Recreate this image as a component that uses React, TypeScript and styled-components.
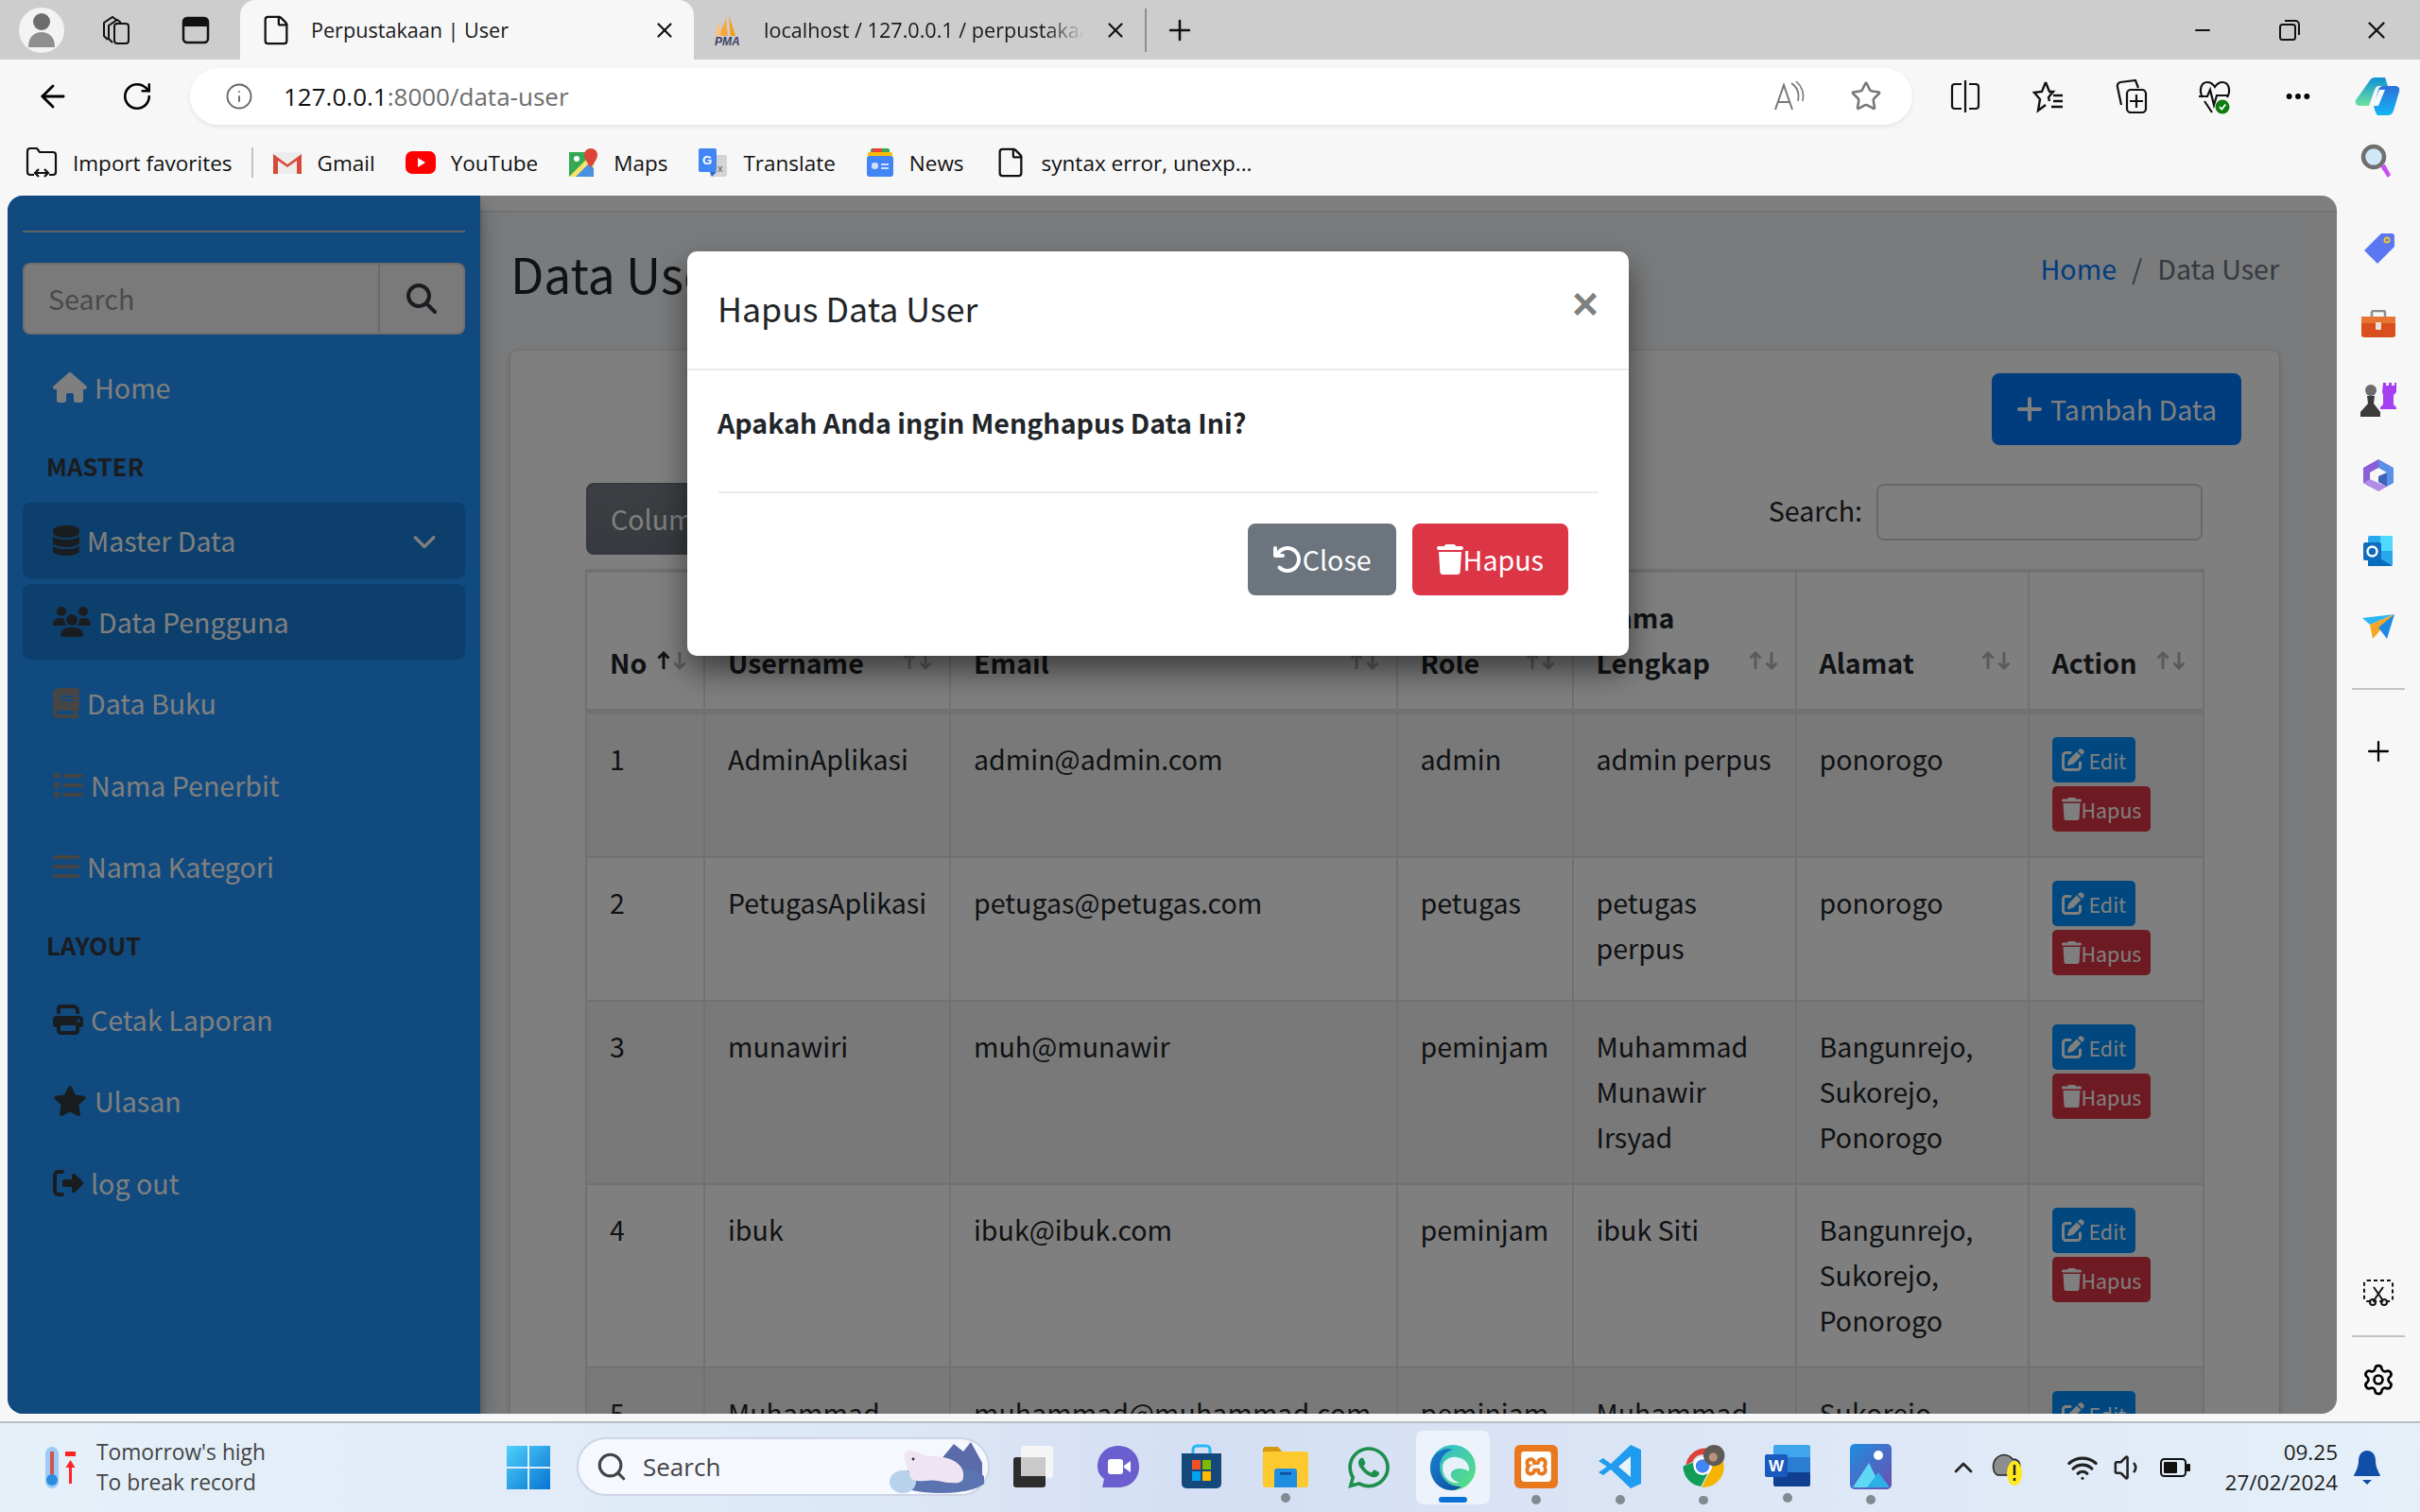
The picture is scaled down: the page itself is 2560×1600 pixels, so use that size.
import styled, { createGlobalStyle } from "styled-components";
import {
  FaHouse, FaDatabase, FaUsers, FaBook, FaList, FaBars, FaPrint, FaStar, FaRightFromBracket,
  FaMagnifyingGlass, FaChevronDown, FaPlus, FaPenToSquare, FaTrash, FaArrowRotateLeft, FaWhatsapp,
} from "react-icons/fa6";
import { SiXampp } from "react-icons/si";
import {
  ArrowLeft, RotateCw, Info, Star, Plus, X, Minus, Ellipsis, Settings, Search, ChevronUp, Wifi, Volume1, File,
} from "lucide-react";

const GlobalStyle = createGlobalStyle`
  html, body { margin: 0; padding: 0; background: #f7f7f7; }
  * { box-sizing: border-box; }
`;

// latin glyphs of Noto Sans CJK run about 12% larger than the page's font, so sizes are scaled down
const pageFont = `"Noto Sans CJK SC", "Noto Sans", sans-serif`;
const chromeFont = `"Open Sans", "Noto Sans", sans-serif`;

const Screen = styled.div`
  width: 2560px;
  height: 1600px;
  display: flex;
  flex-direction: column;
  overflow: hidden;
  background: #f7f7f7;
  font-family: ${chromeFont};
`;

/* browser chrome */
const TabStrip = styled.div`
  height: 63px;
  flex: none;
  display: flex;
  align-items: center;
  padding-left: 20px;
  background: #cdcdcd;
  color: #111;
`;
const Avatar = styled.div`
  width: 48px;
  height: 48px;
  border-radius: 50%;
  background: #f3f3f3;
  display: flex;
  align-items: center;
  justify-content: center;
  margin-right: 13px;
`;
const StripSlot = styled.div<{ $w?: number }>`
  width: ${(p) => p.$w ?? 84}px;
  height: 63px;
  flex: none;
  display: flex;
  align-items: center;
  justify-content: center;
`;
const ActiveTab = styled.div`
  width: 480px;
  height: 63px;
  margin-left: 5px;
  flex: none;
  display: flex;
  align-items: center;
  gap: 20px;
  padding: 0 18px 0 21px;
  background: #f7f7f7;
  border-radius: 16px 16px 0 0;
`;
const IdleTab = styled.div`
  width: 477px;
  height: 63px;
  flex: none;
  display: flex;
  align-items: center;
  gap: 20px;
  padding: 0 18px 0 20px;
`;
const TabTitle = styled.span<{ $fade?: boolean }>`
  flex: 1;
  font-size: 21.6px;
  white-space: nowrap;
  overflow: hidden;
  color: #1a1a1a;
  mask-image: ${(p) => (p.$fade ? "linear-gradient(90deg, #000 88%, transparent)" : "none")};
`;
const StripDivider = styled.div`
  width: 2px;
  height: 46px;
  background: #8e8e8e;
  flex: none;
`;
const WindowControls = styled.div`
  margin-left: auto;
  display: flex;
`;

const Toolbar = styled.div`
  height: 82px;
  flex: none;
  display: flex;
  align-items: center;
  padding: 0 0 4px 12px;
`;
const ToolSlot = styled.div<{ $w?: number }>`
  width: ${(p) => p.$w ?? 88}px;
  flex: none;
  display: flex;
  align-items: center;
  justify-content: center;
`;
const AddressBar = styled.div`
  width: 1822px;
  height: 60px;
  margin: 0 12px 0 11px;
  flex: none;
  display: flex;
  align-items: center;
  padding: 0 32px 0 37px;
  background: #fff;
  border-radius: 30px;
  box-shadow: 0 2px 5px rgba(0, 0, 0, 0.08);
`;
const Url = styled.span`
  margin-left: 32px;
  font-size: 26px;
  color: #111;
`;
const UrlMuted = styled.span`
  color: #6d6d6d;
`;
const AddressEnd = styled.div`
  margin-left: auto;
  display: flex;
  align-items: center;
  gap: 46px;
  color: #777;
`;

const FavoritesBar = styled.div`
  height: 62px;
  flex: none;
  display: flex;
  align-items: center;
  gap: 32px;
  padding: 0 0 8px 27px;
  color: #111;
  font-size: 22.5px;
`;
const Favorite = styled.div`
  display: flex;
  align-items: center;
  gap: 16px;
  white-space: nowrap;
`;
const FavDivider = styled.div`
  width: 2px;
  height: 32px;
  margin: 0 -12px;
  background: #c4c4c4;
`;
const FavSearch = styled.div`
  margin-left: auto;
  width: 92px;
  display: flex;
  justify-content: center;
`;

const Body = styled.div`
  flex: 1;
  min-height: 0;
  display: flex;
`;

/* the admin page */
const Page = styled.div`
  position: relative;
  flex: 1;
  min-width: 0;
  margin: 0 0 8px 8px;
  display: flex;
  overflow: hidden;
  border-radius: 16px;
  background: #f4f6f9;
  font-family: ${pageFont};
  font-size: 28.6px;
  line-height: 48px;
  color: #212529;
`;
const Sidebar = styled.aside`
  position: relative;
  z-index: 1;
  width: 500px;
  flex: none;
  padding: 37px 16px 0;
  background: #2094ff;
  box-shadow: 0 14px 28px rgba(0, 0, 0, 0.25), 0 10px 10px rgba(0, 0, 0, 0.22);
`;
const SideRule = styled.div`
  height: 2px;
  background: #c6c6c6;
`;
const SideSearch = styled.div`
  height: 76px;
  margin: 32px 0 16px;
  display: flex;
  background: #f4f4f4;
  border: 2px solid #dcdcdc;
  border-radius: 8px;
`;
const SideSearchField = styled.div`
  flex: 1;
  padding: 0 25px;
  display: flex;
  align-items: center;
  color: #959595;
  border-right: 2px solid #d4d4d4;
`;
const SideSearchButton = styled.div`
  width: 88px;
  display: flex;
  align-items: center;
  justify-content: center;
  color: #343a40;
`;
const NavItem = styled.div<{ $active?: boolean; $icon?: string; $iconW: number }>`
  height: 80px;
  margin-bottom: 6.4px;
  padding: 0 32px;
  display: flex;
  align-items: center;
  gap: 8px;
  color: #fff;
  border-radius: 8px;
  background: ${(p) => (p.$active ? "rgba(0, 0, 0, 0.15)" : "transparent")};
  & > svg {
    color: ${(p) => p.$icon ?? "#fff"};
    flex: none;
    height: 32px;
    width: ${(p) => p.$iconW}px;
  }
`;
const NavChevron = styled.span`
  margin-left: auto;
  margin-right: -2px;
  display: flex;
`;
const NavHeader = styled.div`
  height: 75.2px;
  padding: 0 0 2px 25px;
  display: flex;
  align-items: center;
  font-size: 25.7px;
  font-weight: 700;
  color: #343a40;
`;

const Main = styled.main`
  flex: 1;
  min-width: 0;
  display: flex;
  flex-direction: column;
`;
const TopBar = styled.div`
  height: 18px;
  flex: none;
  background: #fff;
  border-bottom: 2px solid #dee2e6;
`;
const MainRow = styled.div`
  flex: 1;
  min-height: 0;
  display: flex;
`;
const Content = styled.div`
  flex: 1;
  min-width: 0;
  padding: 32px 31px 0 32px;
`;
const ScrollTrack = styled.div`
  width: 30px;
  flex: none;
  background: #f6f6f7;
`;
const ContentHeader = styled.div`
  display: flex;
  justify-content: space-between;
  align-items: flex-start;
  height: 114px;
`;
const PageTitle = styled.h1`
  margin: -3px 0 0;
  font-size: 51.4px;
  font-weight: 400;
  line-height: 69px;
`;
const Breadcrumb = styled.div`
  display: flex;
  gap: 16px;
  padding-top: 3px;
  color: #6c757d;
`;
const CrumbLink = styled.span`
  color: #007bff;
`;
const Card = styled.section`
  background: #fff;
  border-radius: 8px;
  padding: 24px 40px 0;
  box-shadow: 0 0 2px rgba(0, 0, 0, 0.125), 0 2px 6px rgba(0, 0, 0, 0.2);
`;
const CardTop = styled.div`
  display: flex;
  justify-content: flex-end;
`;
const Button = styled.button<{ $tone: string; $iconW?: number }>`
  height: 76px;
  padding: 0 24px 1px;
  display: inline-flex;
  align-items: center;
  border: 2px solid ${(p) => p.$tone};
  border-radius: 8px;
  background: ${(p) => p.$tone};
  color: #fff;
  font-family: ${pageFont};
  font-size: 28.6px;
  line-height: 48px;
  white-space: nowrap;
  svg {
    height: 32px;
    width: ${(p) => p.$iconW ?? 32}px;
    flex: none;
  }
`;
const AddButton = styled(Button)`
  gap: 8px;
`;
const TableArea = styled.div`
  padding: 40px 41px 0 39px;
`;
const TableControls = styled.div`
  display: flex;
  justify-content: space-between;
  align-items: flex-start;
  height: 91px;
`;
const ColumnButton = styled(Button)`
  margin-left: 1px;
  background: linear-gradient(#787f86, #6c757d);
`;
const TableSearch = styled.label`
  display: flex;
  align-items: center;
  gap: 15px;
  margin-top: 1px;
`;
const SearchLabel = styled.span`
  margin-top: -5px;
`;
const SearchBox = styled.div`
  width: 345px;
  height: 60px;
  border: 2px solid #ced4da;
  border-radius: 8px;
  background: #fff;
`;
const DataTable = styled.table`
  width: 1710px;
  table-layout: fixed;
  border-collapse: collapse;
  border-top: 4px solid #dee2e6;
  border-left: 2px solid #dee2e6;
  border-right: 2px solid #dee2e6;
`;
const HeadCell = styled.th`
  position: relative;
  padding: 23px 60px 25px 24px;
  text-align: left;
  vertical-align: bottom;
  font-weight: 700;
  border-left: 2px solid #dee2e6;
  border-bottom: 6px solid #dee2e6;
`;
const SortArrows = styled.span`
  position: absolute;
  right: 18px;
  bottom: 41px;
  display: flex;
  gap: 3px;
`;
const Row = styled.tr<{ $striped: boolean }>`
  background: ${(p) => (p.$striped ? "rgba(0, 0, 0, 0.05)" : "transparent")};
`;
const Cell = styled.td`
  padding: 23px 24px 25px;
  vertical-align: top;
  border: 2px solid #dee2e6;
`;
const RowActions = styled.div`
  display: flex;
  flex-direction: column;
  align-items: flex-start;
  gap: 4px;
  padding: 1px 0;
`;
const SmallButton = styled.button<{ $tone: string; $gap?: number; $iconW: number }>`
  height: 48px;
  padding: 0 10px;
  display: inline-flex;
  align-items: center;
  gap: ${(p) => p.$gap ?? 0}px;
  border: 0;
  border-radius: 5px;
  background: ${(p) => p.$tone};
  color: #fff;
  font-family: ${pageFont};
  font-size: 21.4px;
  svg {
    height: 24px;
    width: ${(p) => p.$iconW}px;
    flex: none;
  }
`;

/* modal */
const Backdrop = styled.div`
  position: absolute;
  inset: 0;
  z-index: 5;
  background: rgba(0, 0, 0, 0.5);
`;
const Modal = styled.div`
  position: absolute;
  top: 59px;
  left: 719px;
  width: 996px;
  height: 428px;
  background: #fff;
  border-radius: 10px;
  color: #212529;
  box-shadow: 0 16px 32px rgba(0, 0, 0, 0.5);
`;
const ModalHeader = styled.div`
  height: 126px;
  padding: 32px;
  display: flex;
  justify-content: space-between;
  border-bottom: 2px solid #e9ecef;
`;
const ModalTitle = styled.h5`
  margin: -2px 0 0;
  font-size: 35.7px;
  font-weight: 400;
  line-height: 60px;
`;
const ModalClose = styled.span`
  font-family: "Liberation Sans", sans-serif;
  font-size: 48px;
  font-weight: 700;
  line-height: 48px;
  color: #808080;
`;
const ModalBody = styled.div`
  padding: 31px 32px 0;
`;
const Question = styled.p`
  margin: 0;
  font-weight: 700;
`;
const ModalRule = styled.div`
  height: 2px;
  margin-top: 49px;
  background: #e9ecef;
`;
const ModalActions = styled.div`
  display: flex;
  justify-content: flex-end;
  gap: 17px;
  padding: 32px 64px 0 32px;
`;

/* edge rail */
const Rail = styled.div`
  width: 88px;
  flex: none;
  padding: 16px 0 4px;
  display: flex;
  flex-direction: column;
  align-items: center;
`;
const RailSlot = styled.div`
  width: 88px;
  height: 80px;
  flex: none;
  display: flex;
  align-items: center;
  justify-content: center;
`;
const RailRule = styled.div<{ $gap: number }>`
  width: 56px;
  height: 2px;
  margin: ${(p) => p.$gap}px 0;
  background: #c4c4c4;
  flex: none;
`;
const RailSpring = styled.div`
  flex: 1;
`;

/* windows taskbar */
const Taskbar = styled.footer`
  height: 96px;
  flex: none;
  display: flex;
  border-top: 2px solid #b9bec6;
  background: linear-gradient(90deg, #e5f0f9 0%, #e0ebf8 28%, #d5dff3 50%, #dce6f6 72%, #e5f0f9 100%);
  color: #222;
`;
const Weather = styled.div`
  width: 508px;
  padding-left: 45px;
  display: flex;
  align-items: center;
  gap: 21px;
`;
const WeatherText = styled.div`
  font-size: 22.8px;
  line-height: 32px;
  color: #444;
  white-space: nowrap;
`;
const StartSlot = styled.div`
  width: 102px;
  display: flex;
  align-items: center;
  justify-content: center;
`;
const SearchPill = styled.div`
  width: 437px;
  height: 62px;
  margin: 15px 3px 0 0;
  padding: 0 4px 0 18px;
  display: flex;
  align-items: center;
  gap: 16px;
  background: #f5f8fe;
  border: 2px solid #cdd5e6;
  border-radius: 31px;
  font-size: 26px;
  color: #444;
`;
const PillArt = styled.div`
  margin-left: auto;
  display: flex;
`;
const TaskSlot = styled.div`
  width: 88.5px;
  flex: none;
  display: flex;
  justify-content: center;
`;
const TaskTile = styled.div<{ $active?: boolean }>`
  width: 78px;
  height: 78px;
  margin-top: 8px;
  padding-top: 14px;
  display: flex;
  flex-direction: column;
  align-items: center;
  gap: 6px;
  border-radius: 8px;
  background: ${(p) => (p.$active ? "rgba(255, 255, 255, 0.55)" : "transparent")};
`;
const TaskMark = styled.div<{ $active?: boolean }>`
  width: ${(p) => (p.$active ? 30 : 10)}px;
  height: ${(p) => (p.$active ? 6 : 10)}px;
  border-radius: 5px;
  background: ${(p) => (p.$active ? "#0a74d6" : "#838a93")};
`;
const Tray = styled.div`
  margin-left: auto;
  display: flex;
  align-items: center;
  padding-right: 25px;
`;
const TraySlot = styled.div<{ $gap?: number }>`
  width: 49px;
  margin-left: ${(p) => p.$gap ?? 0}px;
  display: flex;
  justify-content: center;
`;
const Clock = styled.div`
  width: 148px;
  text-align: right;
  font-size: 22.5px;
  line-height: 32px;
  color: #222;
`;
const BellSlot = styled.div`
  width: 62px;
  display: flex;
  justify-content: center;
`;

/* drawn icons */
const PersonIcon = () => (
  <svg width="30" height="38" viewBox="0 0 30 38">
    <circle cx="15" cy="10" r="9" fill="#6d6d6d" />
    <path d="M1 37c0-11 6-16 14-16s14 5 14 16z" fill="#8f8f8f" />
  </svg>
);
const WorkspacesIcon = () => (
  <svg width="34" height="34" viewBox="0 0 34 34" fill="none" stroke="#111" strokeWidth="2">
    <path d="M8 27 4 23V9l9-6 4 3" />
    <path d="M13 30 9 26V12l9-6 4 3" />
    <rect x="15" y="10" width="15" height="21" rx="3" />
  </svg>
);
const VerticalTabsIcon = () => (
  <svg width="32" height="32" viewBox="0 0 32 32">
    <rect x="3" y="3" width="26" height="26" rx="4" fill="none" stroke="#111" strokeWidth="2.5" />
    <path d="M3 7a4 4 0 0 1 4-4h18a4 4 0 0 1 4 4v5H3z" fill="#111" />
  </svg>
);
const RestoreIcon = () => (
  <svg width="24" height="24" viewBox="0 0 24 24" fill="none" stroke="#111" strokeWidth="2">
    <rect x="2" y="6" width="16" height="16" rx="2.5" />
    <path d="M7 2h11a4 4 0 0 1 4 4v11" />
  </svg>
);
const PmaIcon = () => (
  <svg width="34" height="34" viewBox="0 0 34 34">
    <path d="M17 1 24 23H19z" fill="#f89c0e" />
    <path d="M14 5 16 23H6z" fill="#f6a93b" />
    <path d="M6 7 9 23H3z" fill="#f9c27b" />
    <text x="2" y="33" fontFamily="Liberation Sans, sans-serif" fontSize="12" fontWeight="700" fontStyle="italic" fill="#3b4266">PMA</text>
  </svg>
);
const ReadAloudIcon = () => (
  <svg width="36" height="36" viewBox="0 0 36 36" fill="none" stroke="#777" strokeWidth="2">
    <path d="M3 32 12 6l9 26M6 24h12" />
    <path d="M20 4c6 4 9 10 7 19M25 2c6 5 9 13 7 21" strokeWidth="1.6" />
  </svg>
);
const SplitIcon = () => (
  <svg width="32" height="34" viewBox="0 0 32 34" fill="none" stroke="#111" strokeWidth="2.2">
    <path d="M12 4H5a3 3 0 0 0-3 3v20a3 3 0 0 0 3 3h7M20 4h7a3 3 0 0 1 3 3v20a3 3 0 0 1-3 3h-7" />
    <path d="M16 0v34" />
  </svg>
);
const FavListIcon = () => (
  <svg width="36" height="36" viewBox="0 0 36 36" fill="none" stroke="#111" strokeWidth="2.4">
    <path d="M15 3l4 10h4l-5 6 1 4M15 3l-4 10-8 1 6 7-2 12 8-6" />
    <path d="M23 17h10M23 23h10M21 29h12" />
  </svg>
);
const CollectionsIcon = () => (
  <svg width="34" height="36" viewBox="0 0 34 36" fill="none" stroke="#111" strokeWidth="2.2">
    <path d="M6 27 2 8a4 4 0 0 1 3-5l16-2 3 8" />
    <rect x="12" y="11" width="20" height="24" rx="4" />
    <path d="M22 16v14M15 23h14" />
  </svg>
);
const HeartCheckIcon = () => (
  <svg width="38" height="38" viewBox="0 0 38 38">
    <path d="M6 20C2 13 4 4 11 4c4 0 6 2 8 5 2-3 4-5 8-5 7 0 9 9 5 16M2 19h9l3-7 4 16 3-10h12M8 24l8 12" fill="none" stroke="#111" strokeWidth="2.2" />
    <circle cx="27" cy="30" r="7.5" fill="#107c10" />
    <path d="M24 30l2.3 2.5 4-5" fill="none" stroke="#fff" strokeWidth="1.8" />
  </svg>
);
const CopilotIcon = () => (
  <svg width="48" height="42" viewBox="0 0 48 42">
    <defs>
      <linearGradient id="cpA" x1="0" y1="0" x2="0" y2="1">
        <stop offset="0" stopColor="#0f8fd8" />
        <stop offset="1" stopColor="#6ee39f" />
      </linearGradient>
      <linearGradient id="cpB" x1="0" y1="0" x2="0" y2="1">
        <stop offset="0" stopColor="#2f6fdc" />
        <stop offset="1" stopColor="#12b6f5" />
      </linearGradient>
    </defs>
    <path d="M16 4c1-2 3-3 6-3h10l3 9H26c-3 0-4 2-5 4l-6 17H6c-4 0-6-2-5-6z" fill="url(#cpA)" />
    <path d="M24 41h10c4 0 6-2 7-5l6-20c1-4-1-6-5-6H30c-2 0-4 1-5 4l-5 17c1 4 2 8 4 10z" fill="url(#cpB)" />
    <path d="M26 14h6L25 31h-6z" fill="#f4fbff" />
  </svg>
);
const ImportFavIcon = () => (
  <svg width="34" height="34" viewBox="0 0 34 34" fill="none" stroke="#111" strokeWidth="2.2">
    <path d="M9 30H5a3 3 0 0 1-3-3V5a3 3 0 0 1 3-3h7l3 4h14a3 3 0 0 1 3 3v18a3 3 0 0 1-3 3h-4" />
    <path d="M10 28h14M14 24l-4 4 4 4M20 24l4 4-4 4" />
  </svg>
);
const GmailIcon = () => (
  <svg width="32" height="26" viewBox="0 0 32 26">
    <rect x="1" y="2" width="30" height="23" fill="#ececec" />
    <path d="M1 25V4l15 11L31 4v21h-5V11L16 18 6 11v14z" fill="#d8493b" />
  </svg>
);
const YoutubeIcon = () => (
  <svg width="32" height="24" viewBox="0 0 32 24">
    <rect width="32" height="24" rx="7" fill="#f00" />
    <path d="M13 7l8 5-8 5z" fill="#fff" />
  </svg>
);
const MapsIcon = () => (
  <svg width="32" height="32" viewBox="0 0 32 32">
    <rect x="1" y="5" width="26" height="26" fill="#34a853" />
    <path d="M1 31 20 12l7 7v12z" fill="#fbe26c" />
    <path d="M8 31 22 17l5 5v9z" fill="#4a90e2" />
    <path d="M24 1c-4 0-7 3-7 7 0 5 7 13 7 13s7-8 7-13c0-4-3-7-7-7z" fill="#db4437" />
    <circle cx="9" cy="12" r="3" fill="#fff" />
  </svg>
);
const TranslateIcon = () => (
  <svg width="32" height="32" viewBox="0 0 32 32">
    <rect x="13" y="8" width="18" height="23" rx="2" fill="#d4d4d4" />
    <rect x="1" y="1" width="19" height="25" rx="2" fill="#4285f4" />
    <path d="M20 26l-5 5-2-5z" fill="#3367c9" />
    <text x="5" y="18" fontFamily="Liberation Sans, sans-serif" fontSize="13" fontWeight="700" fill="#fff">G</text>
    <text x="21" y="26" fontFamily="Liberation Sans, sans-serif" fontSize="11" fill="#555">x</text>
  </svg>
);
const NewsIcon = () => (
  <svg width="30" height="32" viewBox="0 0 30 32">
    <rect x="5" y="1" width="20" height="10" rx="2" fill="#34a853" />
    <rect x="7" y="1" width="10" height="8" fill="#ea4335" />
    <rect x="2" y="5" width="26" height="10" rx="2" fill="#fbbc05" />
    <rect x="1" y="9" width="28" height="22" rx="3" fill="#4285f4" />
    <rect x="6" y="16" width="7" height="7" rx="3" fill="#cfe0fb" />
    <rect x="16" y="17" width="8" height="2" fill="#cfe0fb" />
    <rect x="16" y="21" width="8" height="2" fill="#cfe0fb" />
  </svg>
);
const DiscoverIcon = () => (
  <svg width="34" height="40" viewBox="0 0 34 40">
    <circle cx="14" cy="14" r="11" fill="#cfe8f8" stroke="#6f6f6f" strokeWidth="4.5" />
    <path d="M21 24l8 12 3-3-6-11z" fill="#c94df0" />
  </svg>
);
const TagIcon = () => (
  <svg width="36" height="34" viewBox="0 0 36 34">
    <path d="M21 1h11a3 3 0 0 1 3 3v11L17 33 3 19z" fill="#5a77f2" />
    <circle cx="27" cy="8" r="3.5" fill="#f2c233" />
    <circle cx="27" cy="8" r="1.5" fill="#5a77f2" />
  </svg>
);
const BriefcaseIcon = () => (
  <svg width="38" height="30" viewBox="0 0 38 30">
    <path d="M12 8V3a2 2 0 0 1 2-2h10a2 2 0 0 1 2 2v5" fill="none" stroke="#8d8d8d" strokeWidth="2.5" />
    <rect x="1" y="7" width="36" height="22" rx="3" fill="#d9501e" />
    <rect x="1" y="7" width="36" height="7" fill="#e87533" />
    <rect x="16" y="13" width="6" height="8" rx="1" fill="#e8dfd8" />
  </svg>
);
const ChessIcon = () => (
  <svg width="40" height="38" viewBox="0 0 40 38">
    <path d="M25 1h3v3h3V1h3v3h3V1h2v10l-3 3v10l3 3v2H22v-2l3-3V14l-1-3z" fill="#a43ff2" />
    <circle cx="12" cy="9" r="6" fill="#6d6d6d" />
    <path d="M8 15h8l-1 8 7 9v5H1v-5l8-9z" fill="#3b3b3b" />
  </svg>
);
const M365Icon = () => (
  <svg width="34" height="36" viewBox="0 0 34 36">
    <path d="M17 1 33 10v16l-7 4V15L17 10z" fill="#5b8fe8" />
    <path d="M1 10 17 1v9L8 15v15l-7-4z" fill="#8a5fd6" />
    <path d="M8 22 26 30 17 35 1 26z" fill="#b18de8" />
    <path d="M26 15v15l-9-5v-6z" fill="#3c63b8" />
  </svg>
);
const OutlookIcon = () => (
  <svg width="34" height="34" viewBox="0 0 34 34">
    <rect x="6" y="1" width="26" height="32" rx="2" fill="#28a8ea" />
    <rect x="19" y="1" width="13" height="16" fill="#50d9ff" />
    <path d="M6 17 32 33H6z" fill="#0a6cbd" />
    <rect x="1" y="8" width="19" height="19" rx="2" fill="#0f6cbd" />
    <circle cx="10.5" cy="17.5" r="5" fill="none" stroke="#fff" strokeWidth="2.4" />
  </svg>
);
const SendIcon = () => (
  <svg width="36" height="28" viewBox="0 0 36 28">
    <path d="M1 5 35 1 9 12z" fill="#29b6f6" />
    <path d="M35 1 9 12l3 15z" fill="#f5a623" />
    <path d="M35 1 18 15l9 12z" fill="#1e88e5" />
  </svg>
);
const SnipIcon = () => (
  <svg width="34" height="30" viewBox="0 0 34 30" fill="none" stroke="#111" strokeWidth="2">
    <rect x="2" y="2" width="30" height="22" rx="3" strokeDasharray="4 3" />
    <path d="M12 9l9 13M22 9l-9 13" />
    <circle cx="11" cy="25" r="3" />
    <circle cx="23" cy="25" r="3" />
  </svg>
);
const ThermometerIcon = () => (
  <svg width="36" height="46" viewBox="0 0 36 46">
    <rect x="3" y="1" width="14" height="44" rx="7" fill="#9ccbf5" />
    <rect x="8" y="6" width="4" height="24" fill="#d1524f" />
    <circle cx="10" cy="36" r="6" fill="#2b8de0" />
    <rect x="24" y="6" width="11" height="5" fill="#f22" />
    <path d="M29.5 15l5 8h-3.5v17h-3V23h-3.5z" fill="#f22" />
  </svg>
);
const WindowsLogo = () => (
  <svg width="46" height="46" viewBox="0 0 46 46">
    <defs>
      <linearGradient id="winA" x1="0" y1="0" x2="1" y2="1">
        <stop offset="0" stopColor="#4fd0fb" />
        <stop offset="1" stopColor="#0674d1" />
      </linearGradient>
    </defs>
    <path d="M0 0h22v22H0zM24 0h22v22H24zM0 24h22v22H0zM24 24h22v22H24z" fill="url(#winA)" />
  </svg>
);
const PolarBearArt = () => (
  <svg width="102" height="56" viewBox="0 0 102 56">
    <path d="M50 28 70 4l10 8 8-10 12 22v20H50z" fill="#5b6aa8" />
    <ellipse cx="56" cy="42" rx="48" ry="14" fill="#5b73b0" />
    <ellipse cx="16" cy="44" rx="14" ry="12" fill="#b9d2ec" />
    <path d="M18 20c-2-6 2-10 8-9 6 1 10 6 22 6 18 0 34 8 32 22 0 6-6 7-14 6-8 0-14-4-26-2-8 1-14 0-16-4-2-8-4-12-6-19z" fill="#eee4f2" />
    <circle cx="27" cy="20" r="1.4" fill="#333" />
  </svg>
);
const TaskViewIcon = () => (
  <svg width="48" height="48" viewBox="0 0 48 48">
    <rect x="10" y="2" width="34" height="34" rx="3" fill="#f5f5f5" />
    <rect x="2" y="14" width="34" height="32" rx="3" fill="#2d2d2d" />
    <rect x="10" y="14" width="26" height="20" fill="#c9c9c9" />
  </svg>
);
const MeetIcon = () => (
  <svg width="48" height="48" viewBox="0 0 48 48">
    <path d="M24 2c13 0 22 9 22 22s-9 22-22 22H7l2-9C4 33 2 29 2 24 2 11 11 2 24 2z" fill="#6b5fd0" />
    <rect x="13" y="16" width="16" height="16" rx="3" fill="#fff" />
    <path d="M30 23l7-5v12l-7-5z" fill="#fff" />
  </svg>
);
const StoreIcon = () => (
  <svg width="48" height="48" viewBox="0 0 48 48">
    <path d="M15 10V6a4 4 0 0 1 4-4h10a4 4 0 0 1 4 4v4" fill="none" stroke="#29b6f6" strokeWidth="3" />
    <path d="M3 10h42v32a5 5 0 0 1-5 5H8a5 5 0 0 1-5-5z" fill="#15497c" />
    <rect x="14" y="17" width="9" height="10" fill="#f25022" />
    <rect x="25" y="17" width="9" height="10" fill="#7fba00" />
    <rect x="14" y="29" width="9" height="10" fill="#00a4ef" />
    <rect x="25" y="29" width="9" height="10" fill="#ffb900" />
  </svg>
);
const FolderIcon = () => (
  <svg width="50" height="46" viewBox="0 0 50 46">
    <path d="M1 6a3 3 0 0 1 3-3h13l5 6h-21z" fill="#d69a10" />
    <rect x="1" y="8" width="48" height="38" rx="3" fill="#fcc92f" />
    <path d="M16 26h18a3 3 0 0 1 3 3v17H13V29a3 3 0 0 1 3-3z" fill="#1e8fe0" />
    <rect x="19" y="30" width="12" height="2.5" fill="#0a4f96" />
  </svg>
);
const EdgeIcon = () => (
  <svg width="50" height="50" viewBox="0 0 50 50">
    <defs>
      <linearGradient id="edgeA" x1="0" y1="0" x2="1" y2="1">
        <stop offset="0" stopColor="#2db9d6" />
        <stop offset="1" stopColor="#5be27a" />
      </linearGradient>
      <linearGradient id="edgeB" x1="0" y1="0" x2="1" y2="1">
        <stop offset="0" stopColor="#1a7fd0" />
        <stop offset="1" stopColor="#0d4f9e" />
      </linearGradient>
    </defs>
    <circle cx="25" cy="25" r="24" fill="url(#edgeA)" />
    <path d="M1 25C1 10 14 3 25 6c-9 2-14 10-14 18 0 12 10 22 23 21-3 2-6 4-10 4C11 49 1 39 1 25z" fill="url(#edgeB)" />
    <path d="M14 25c0-8 8-12 15-11 9 1 14 8 13 15-7-4-14-4-18 0-3 4-1 9 8 12-10 2-18-6-18-16z" fill="#e8f0fa" />
  </svg>
);
const XamppIcon = () => (
  <svg width="48" height="48" viewBox="0 0 48 48">
    <rect x="1" y="1" width="46" height="46" rx="6" fill="#e8791f" />
    <foreignObject x="8" y="8" width="32" height="32">
      <SiXampp size={32} color="#fff" />
    </foreignObject>
  </svg>
);
const VscodeIcon = () => (
  <svg width="48" height="48" viewBox="0 0 48 48">
    <path d="M35 1 46 6v36l-11 5L14 27l-8 6-5-3 9-6-9-6 5-3 8 6z" fill="#1f9cf0" />
    <path d="M35 13 22 24l13 11z" fill="#eaf2fa" />
  </svg>
);
const ChromeIcon = () => (
  <svg width="52" height="52" viewBox="0 0 52 52">
    <path d="M6 24a22 22 0 0 1 38-12H25a12 12 0 0 0-11 8z" fill="#db4437" />
    <path d="M3 25a23 23 0 0 0 20 23l9-17a12 12 0 0 1-18-10z" fill="#0f9d58" />
    <path d="M45 13a23 23 0 0 1-21 36l9-17a12 12 0 0 0-4-19z" fill="#f4b400" />
    <circle cx="25" cy="25" r="9" fill="#4285f4" stroke="#fff" strokeWidth="2.5" />
    <circle cx="38" cy="13" r="12" fill="#5f5a55" />
    <circle cx="37" cy="15" r="5" fill="#b98f7e" />
  </svg>
);
const WordIcon = () => (
  <svg width="50" height="46" viewBox="0 0 50 46">
    <path d="M12 1h35a2 2 0 0 1 2 2v11H10V3a2 2 0 0 1 2-2z" fill="#41a5ee" />
    <rect x="10" y="14" width="39" height="16" fill="#2b7cd3" />
    <path d="M10 30h39v13a2 2 0 0 1-2 2H12a2 2 0 0 1-2-2z" fill="#103f91" />
    <rect x="1" y="11" width="24" height="24" rx="2" fill="#185abd" />
    <text x="5" y="29" fontFamily="Liberation Sans, sans-serif" fontSize="17" fontWeight="700" fill="#fff">W</text>
  </svg>
);
const PhotosIcon = () => (
  <svg width="44" height="48" viewBox="0 0 44 48">
    <defs>
      <linearGradient id="phA" x1="0" y1="0" x2="1" y2="1">
        <stop offset="0" stopColor="#1f8ee0" />
        <stop offset="1" stopColor="#6b4fb0" />
      </linearGradient>
    </defs>
    <rect width="44" height="48" rx="5" fill="url(#phA)" />
    <circle cx="30" cy="12" r="5" fill="#fff" />
    <path d="M3 46 20 20l13 26z" fill="#5fd8f5" />
    <path d="M18 46 30 30l12 16z" fill="#2bb0e8" />
  </svg>
);
const CloudWarnIcon = () => (
  <svg width="38" height="40" viewBox="0 0 38 40">
    <path d="M6 28C0 24 0 14 6 9c5-4 12-3 16 2 5 0 8 3 8 8v9z" fill="#8d8d8d" stroke="#222" strokeWidth="1.5" />
    <ellipse cx="24" cy="26" rx="8" ry="13" fill="#ffe81c" />
    <path d="M24 17v11M24 31v3" stroke="#222" strokeWidth="2.5" />
  </svg>
);
const BatteryIcon = () => (
  <svg width="32" height="20" viewBox="0 0 32 20">
    <rect x="1" y="1" width="26" height="18" rx="3.5" fill="none" stroke="#111" strokeWidth="2" />
    <rect x="4" y="4" width="14" height="12" rx="1" fill="#111" />
    <rect x="28" y="6" width="4" height="8" rx="1" fill="#111" />
  </svg>
);
const BellIcon = () => (
  <svg width="30" height="38" viewBox="0 0 30 38">
    <path d="M15 1c6 0 9 5 9 11 0 8 5 14 5 16H1c0-2 5-8 5-16C6 6 9 1 15 1z" fill="#0f4fa8" />
    <path d="M10 32h10l-5 5z" fill="#0f4fa8" />
  </svg>
);
const SortArrow = ({ up, dark }: { up?: boolean; dark?: boolean }) => (
  <svg
    width="14"
    height="20"
    viewBox="0 0 14 20"
    fill="none"
    stroke={dark ? "#212529" : "#b4b6b8"}
    strokeWidth="3"
    style={up ? undefined : { transform: "rotate(180deg)" }}
  >
    <path d="M7 19V2M1.5 7.5 7 2l5.5 5.5" />
  </svg>
);

const columns = [
  { title: "No", width: 125 },
  { title: "Username", width: 260 },
  { title: "Email", width: 472.5 },
  { title: "Role", width: 186 },
  { title: "Nama Lengkap", width: 236 },
  { title: "Alamat", width: 246 },
  { title: "Action", width: 185 },
];

const users = [
  { no: 1, username: "AdminAplikasi", email: "admin@admin.com", role: "admin", name: "admin perpus", address: "ponorogo" },
  { no: 2, username: "PetugasAplikasi", email: "petugas@petugas.com", role: "petugas", name: "petugas perpus", address: "ponorogo" },
  { no: 3, username: "munawiri", email: "muh@munawir", role: "peminjam", name: "Muhammad Munawir Irsyad", address: "Bangunrejo, Sukorejo, Ponorogo" },
  { no: 4, username: "ibuk", email: "ibuk@ibuk.com", role: "peminjam", name: "ibuk Siti", address: "Bangunrejo, Sukorejo, Ponorogo" },
  { no: 5, username: "Muhammad", email: "muhammad@muhammad.com", role: "peminjam", name: "Muhammad", address: "Sukorejo" },
];

const railTop = [<TagIcon />, <BriefcaseIcon />, <ChessIcon />, <M365Icon />, <OutlookIcon />, <SendIcon />];

const taskApps = [
  { icon: <TaskViewIcon /> },
  { icon: <MeetIcon /> },
  { icon: <StoreIcon /> },
  { icon: <FolderIcon />, open: true },
  { icon: <FaWhatsapp size={50} color="#1f8f4e" /> },
  { icon: <EdgeIcon />, open: true, active: true },
  { icon: <XamppIcon />, open: true },
  { icon: <VscodeIcon />, open: true },
  { icon: <ChromeIcon />, open: true },
  { icon: <WordIcon />, open: true },
  { icon: <PhotosIcon />, open: true },
];

const App = () => {
  return (
    <Screen>
      <GlobalStyle />
      <TabStrip>
        <Avatar><PersonIcon /></Avatar>
        <StripSlot><WorkspacesIcon /></StripSlot>
        <StripSlot><VerticalTabsIcon /></StripSlot>
        <ActiveTab>
          <File size={34} strokeWidth={1.6} />
          <TabTitle>Perpustakaan | User</TabTitle>
          <X size={26} strokeWidth={2} />
        </ActiveTab>
        <IdleTab>
          <PmaIcon />
          <TabTitle $fade>localhost / 127.0.0.1 / perpustakaan / pengguna</TabTitle>
          <X size={26} strokeWidth={2} />
        </IdleTab>
        <StripDivider />
        <StripSlot $w={70}><Plus size={34} strokeWidth={1.8} /></StripSlot>
        <WindowControls>
          <StripSlot $w={92}><Minus size={24} strokeWidth={2} /></StripSlot>
          <StripSlot $w={92}><RestoreIcon /></StripSlot>
          <StripSlot $w={92}><X size={30} strokeWidth={1.8} /></StripSlot>
        </WindowControls>
      </TabStrip>

      <Toolbar>
        <ToolSlot><ArrowLeft size={38} strokeWidth={1.8} /></ToolSlot>
        <ToolSlot $w={90}><RotateCw size={34} strokeWidth={1.8} /></ToolSlot>
        <AddressBar>
          <Info size={30} strokeWidth={1.5} color="#666" />
          <Url>127.0.0.1<UrlMuted>:8000/data-user</UrlMuted></Url>
          <AddressEnd>
            <ReadAloudIcon />
            <Star size={34} strokeWidth={1.8} />
          </AddressEnd>
        </AddressBar>
        <ToolSlot><SplitIcon /></ToolSlot>
        <ToolSlot><FavListIcon /></ToolSlot>
        <ToolSlot><CollectionsIcon /></ToolSlot>
        <ToolSlot><HeartCheckIcon /></ToolSlot>
        <ToolSlot><Ellipsis size={32} strokeWidth={2.4} /></ToolSlot>
        <ToolSlot $w={80}><CopilotIcon /></ToolSlot>
      </Toolbar>

      <FavoritesBar>
        <Favorite><ImportFavIcon />Import favorites</Favorite>
        <FavDivider />
        <Favorite><GmailIcon />Gmail</Favorite>
        <Favorite><YoutubeIcon />YouTube</Favorite>
        <Favorite><MapsIcon />Maps</Favorite>
        <Favorite><TranslateIcon />Translate</Favorite>
        <Favorite><NewsIcon />News</Favorite>
        <Favorite><File size={34} strokeWidth={1.6} />syntax error, unexp...</Favorite>
        <FavSearch><DiscoverIcon /></FavSearch>
      </FavoritesBar>

      <Body>
        <Page>
          <Sidebar>
            <SideRule />
            <SideSearch>
              <SideSearchField>Search</SideSearchField>
              <SideSearchButton><FaMagnifyingGlass size={32} /></SideSearchButton>
            </SideSearch>
            <NavItem $iconW={36}><FaHouse />Home</NavItem>
            <NavHeader>MASTER</NavHeader>
            <NavItem $active $icon="#343a40" $iconW={28}>
              <FaDatabase />Master Data
              <NavChevron><FaChevronDown size={26} color="#fff" /></NavChevron>
            </NavItem>
            <NavItem $active $icon="#343a40" $iconW={40}><FaUsers />Data Pengguna</NavItem>
            <NavItem $icon="#8a8a8a" $iconW={28}><FaBook />Data Buku</NavItem>
            <NavItem $icon="#8a8a8a" $iconW={32}><FaList />Nama Penerbit</NavItem>
            <NavItem $icon="#8a8a8a" $iconW={28}><FaBars />Nama Kategori</NavItem>
            <NavHeader>LAYOUT</NavHeader>
            <NavItem $icon="#343a40" $iconW={32}><FaPrint />Cetak Laporan</NavItem>
            <NavItem $icon="#343a40" $iconW={36}><FaStar />Ulasan</NavItem>
            <NavItem $icon="#343a40" $iconW={32}><FaRightFromBracket />log out</NavItem>
          </Sidebar>

          <Main>
            <TopBar />
            <MainRow>
              <Content>
                <ContentHeader>
                  <PageTitle>Data User</PageTitle>
                  <Breadcrumb>
                    <CrumbLink>Home</CrumbLink>
                    <span>/</span>
                    <span>Data User</span>
                  </Breadcrumb>
                </ContentHeader>
                <Card>
                  <CardTop>
                    <AddButton $tone="#007bff" $iconW={28}><FaPlus />Tambah Data</AddButton>
                  </CardTop>
                  <TableArea>
                    <TableControls>
                      <ColumnButton $tone="#6c757d">Column visibility</ColumnButton>
                      <TableSearch><SearchLabel>Search:</SearchLabel><SearchBox /></TableSearch>
                    </TableControls>
                    <DataTable>
                      <colgroup>
                        {columns.map((c) => <col key={c.title} width={c.width} />)}
                      </colgroup>
                      <thead>
                        <tr>
                          {columns.map((c, i) => (
                            <HeadCell key={c.title}>
                              {c.title}
                              <SortArrows>
                                <SortArrow up dark={i === 0} />
                                <SortArrow />
                              </SortArrows>
                            </HeadCell>
                          ))}
                        </tr>
                      </thead>
                      <tbody>
                        {users.map((u) => (
                          <Row key={u.no} $striped={u.no % 2 === 1}>
                            <Cell>{u.no}</Cell>
                            <Cell>{u.username}</Cell>
                            <Cell>{u.email}</Cell>
                            <Cell>{u.role}</Cell>
                            <Cell>{u.name}</Cell>
                            <Cell>{u.address}</Cell>
                            <Cell>
                              <RowActions>
                                <SmallButton $tone="#0090ff" $gap={5} $iconW={24}><FaPenToSquare />Edit</SmallButton>
                                <SmallButton $tone="#dc3545" $iconW={21}><FaTrash />Hapus</SmallButton>
                              </RowActions>
                            </Cell>
                          </Row>
                        ))}
                      </tbody>
                    </DataTable>
                  </TableArea>
                </Card>
              </Content>
              <ScrollTrack />
            </MainRow>
          </Main>

          <Backdrop>
            <Modal>
              <ModalHeader>
                <ModalTitle>Hapus Data User</ModalTitle>
                <ModalClose>×</ModalClose>
              </ModalHeader>
              <ModalBody>
                <Question>Apakah Anda ingin Menghapus Data Ini?</Question>
                <ModalRule />
              </ModalBody>
              <ModalActions>
                <Button $tone="#6c757d"><FaArrowRotateLeft />Close</Button>
                <Button $tone="#dc3545" $iconW={28}><FaTrash />Hapus</Button>
              </ModalActions>
            </Modal>
          </Backdrop>
        </Page>

        <Rail>
          {railTop.map((icon, i) => <RailSlot key={i}>{icon}</RailSlot>)}
          <RailRule $gap={25} />
          <RailSlot><Plus size={34} strokeWidth={1.6} /></RailSlot>
          <RailSpring />
          <RailSlot><SnipIcon /></RailSlot>
          <RailRule $gap={5} />
          <RailSlot><Settings size={36} strokeWidth={1.8} /></RailSlot>
        </Rail>
      </Body>

      <Taskbar>
        <Weather>
          <ThermometerIcon />
          <WeatherText>Tomorrow's high<br />To break record</WeatherText>
        </Weather>
        <StartSlot><WindowsLogo /></StartSlot>
        <SearchPill>
          <Search size={34} strokeWidth={2.2} />
          Search
          <PillArt><PolarBearArt /></PillArt>
        </SearchPill>
        {taskApps.map((app, i) => (
          <TaskSlot key={i}>
            <TaskTile $active={app.active}>
              {app.icon}
              {app.open && <TaskMark $active={app.active} />}
            </TaskTile>
          </TaskSlot>
        ))}
        <Tray>
          <TraySlot><ChevronUp size={32} strokeWidth={2} /></TraySlot>
          <TraySlot><CloudWarnIcon /></TraySlot>
          <TraySlot $gap={28}><Wifi size={34} strokeWidth={2.2} /></TraySlot>
          <TraySlot><Volume1 size={34} strokeWidth={1.8} /></TraySlot>
          <TraySlot><BatteryIcon /></TraySlot>
          <Clock>09.25<br />27/02/2024</Clock>
          <BellSlot><BellIcon /></BellSlot>
        </Tray>
      </Taskbar>
    </Screen>
  );
};

export default App;
